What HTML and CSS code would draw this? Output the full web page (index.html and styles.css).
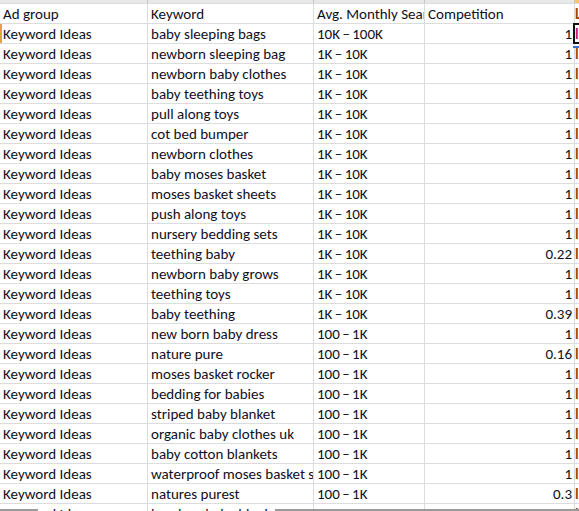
FILE: index.html
```html
<!DOCTYPE html>
<html>
<head>
<meta charset="utf-8">
<link rel="stylesheet" href="styles.css">
</head>
<body>
<div class="sheet">
  <div class="colhead">
    <div class="ch"></div><div class="ch"></div><div class="ch"></div><div class="ch"></div><div class="ch sel"></div>
  </div>
  <div class="row"><div class="c">Ad group</div><div class="c">Keyword</div><div class="c">Avg. Monthly Searches (exact match only)</div><div class="c">Competition</div><div class="c e">Low</div></div>
  <div class="row selrow"><div class="c">Keyword Ideas</div><div class="c">baby sleeping bags</div><div class="c r">10K – 100K</div><div class="c n">1</div><div class="c e active"><span>l</span></div></div>
  <div class="row"><div class="c">Keyword Ideas</div><div class="c">newborn sleeping bag</div><div class="c r">1K – 10K</div><div class="c n">1</div><div class="c e">l</div></div>
  <div class="row"><div class="c">Keyword Ideas</div><div class="c">newborn baby clothes</div><div class="c r">1K – 10K</div><div class="c n">1</div><div class="c e">l</div></div>
  <div class="row"><div class="c">Keyword Ideas</div><div class="c">baby teething toys</div><div class="c r">1K – 10K</div><div class="c n">1</div><div class="c e">l</div></div>
  <div class="row"><div class="c">Keyword Ideas</div><div class="c">pull along toys</div><div class="c r">1K – 10K</div><div class="c n">1</div><div class="c e">l</div></div>
  <div class="row"><div class="c">Keyword Ideas</div><div class="c">cot bed bumper</div><div class="c r">1K – 10K</div><div class="c n">1</div><div class="c e">l</div></div>
  <div class="row"><div class="c">Keyword Ideas</div><div class="c">newborn clothes</div><div class="c r">1K – 10K</div><div class="c n">1</div><div class="c e">l</div></div>
  <div class="row"><div class="c">Keyword Ideas</div><div class="c">baby moses basket</div><div class="c r">1K – 10K</div><div class="c n">1</div><div class="c e">l</div></div>
  <div class="row"><div class="c">Keyword Ideas</div><div class="c">moses basket sheets</div><div class="c r">1K – 10K</div><div class="c n">1</div><div class="c e">l</div></div>
  <div class="row"><div class="c">Keyword Ideas</div><div class="c">push along toys</div><div class="c r">1K – 10K</div><div class="c n">1</div><div class="c e">l</div></div>
  <div class="row"><div class="c">Keyword Ideas</div><div class="c">nursery bedding sets</div><div class="c r">1K – 10K</div><div class="c n">1</div><div class="c e">l</div></div>
  <div class="row"><div class="c">Keyword Ideas</div><div class="c">teething baby</div><div class="c r">1K – 10K</div><div class="c n">0.22</div><div class="c e">l</div></div>
  <div class="row"><div class="c">Keyword Ideas</div><div class="c">newborn baby grows</div><div class="c r">1K – 10K</div><div class="c n">1</div><div class="c e">l</div></div>
  <div class="row"><div class="c">Keyword Ideas</div><div class="c">teething toys</div><div class="c r">1K – 10K</div><div class="c n">1</div><div class="c e">l</div></div>
  <div class="row"><div class="c">Keyword Ideas</div><div class="c">baby teething</div><div class="c r">1K – 10K</div><div class="c n">0.39</div><div class="c e">l</div></div>
  <div class="row"><div class="c">Keyword Ideas</div><div class="c">new born baby dress</div><div class="c r">100 – 1K</div><div class="c n">1</div><div class="c e">l</div></div>
  <div class="row"><div class="c">Keyword Ideas</div><div class="c">nature pure</div><div class="c r">100 – 1K</div><div class="c n">0.16</div><div class="c e">l</div></div>
  <div class="row"><div class="c">Keyword Ideas</div><div class="c">moses basket rocker</div><div class="c r">100 – 1K</div><div class="c n">1</div><div class="c e">l</div></div>
  <div class="row"><div class="c">Keyword Ideas</div><div class="c">bedding for babies</div><div class="c r">100 – 1K</div><div class="c n">1</div><div class="c e">l</div></div>
  <div class="row"><div class="c">Keyword Ideas</div><div class="c">striped baby blanket</div><div class="c r">100 – 1K</div><div class="c n">1</div><div class="c e">l</div></div>
  <div class="row"><div class="c">Keyword Ideas</div><div class="c">organic baby clothes uk</div><div class="c r">100 – 1K</div><div class="c n">1</div><div class="c e">l</div></div>
  <div class="row"><div class="c">Keyword Ideas</div><div class="c">baby cotton blankets</div><div class="c r">100 – 1K</div><div class="c n">1</div><div class="c e">l</div></div>
  <div class="row"><div class="c">Keyword Ideas</div><div class="c">waterproof moses basket sheets</div><div class="c r">100 – 1K</div><div class="c n">1</div><div class="c e">l</div></div>
  <div class="row"><div class="c">Keyword Ideas</div><div class="c">natures purest</div><div class="c r">100 – 1K</div><div class="c n">0.3</div><div class="c e">l</div></div>
  <div class="row"><div class="c">Keyword Ideas</div><div class="c">bamboo baby blankets</div><div class="c r">100 – 1K</div><div class="c n">1</div><div class="c e">l</div></div>
  <div class="bottombar"><div class="seg left"></div><div class="seg right"></div></div>
</div>
</body>
</html>
```

FILE: styles.css
```css
html, body {
  margin: 0;
  padding: 0;
  background: #fff;
  overflow: hidden;
}
.sheet {
  position: relative;
  width: 579px;
  height: 511px;
  overflow: hidden;
  font-family: Carlito, Calibri, Lato, "Liberation Sans", sans-serif;
  font-size: 15px;
  color: #0f0f24;
}
.colhead {
  display: grid;
  grid-template-columns: 148px 166px 111px 150px 1fr;
  height: 3px;
  background: #e8e8e8;
}
.ch {
  border-right: 1px solid #c6c6c6;
}
.ch.sel {
  background: #f6c66a;
  border-right: none;
}
.row {
  display: grid;
  grid-template-columns: 148px 166px 111px 150px 1fr;
  height: 20px;
  box-sizing: border-box;
  border-top: 1px solid #dadcdd;
}
.c {
  border-right: 1px solid #dadcdd;
  padding: 0 3px;
  line-height: 21px;
  height: 19px;
  white-space: nowrap;
  overflow: hidden;
}
.c.r {
  word-spacing: -1px;
}
.c.n {
  text-align: right;
  padding-right: 2px;
}
.c.e {
  border-right: none;
  padding-left: 0;
  color: #9c4a00;
  font-weight: bold;
}
.selrow .c:first-child {
  box-shadow: inset 2px 0 0 #e3a045;
}
.c.active {
  position: relative;
  overflow: visible;
}
.c.active span {
  color: #c2187a;
}
.c.active::before {
  content: "";
  position: absolute;
  left: -2px;
  top: -1px;
  width: 10px;
  height: 21px;
  border: 2px solid #111;
  box-sizing: border-box;
}
.c.active::after {
  content: "";
  position: absolute;
  left: -2px;
  top: 22px;
  width: 8px;
  height: 2px;
  background: #3b6fd6;
}
.bottombar {
  position: absolute;
  left: 0;
  right: 0;
  top: 509px;
  height: 2px;
}
.seg {
  position: absolute;
  top: 0;
  height: 2px;
  background: #9a9a9a;
}
.seg.left { left: 0; width: 38px; }
.seg.right { left: 275px; right: 0; }
```
